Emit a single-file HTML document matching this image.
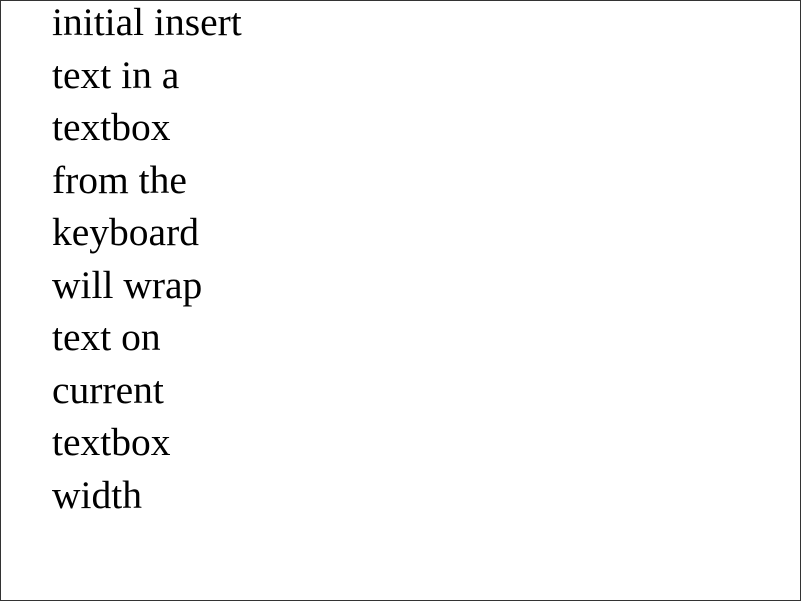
<!DOCTYPE html>
<html><head><style>
html,body{margin:0;padding:0;background:#fff;}
.box{position:absolute;left:0;top:0;width:799px;height:599px;border:1px solid #333;overflow:hidden;}
.t{position:absolute;left:51px;top:-5px;font-family:"Liberation Serif",serif;font-size:39.5px;line-height:52.5px;color:#000;white-space:nowrap;}
</style></head><body>
<div class="box"><div class="t">initial insert<br>text in a<br>textbox<br>from the<br>keyboard<br>will wrap<br>text on<br>current<br>textbox<br>width</div></div>
</body></html>
